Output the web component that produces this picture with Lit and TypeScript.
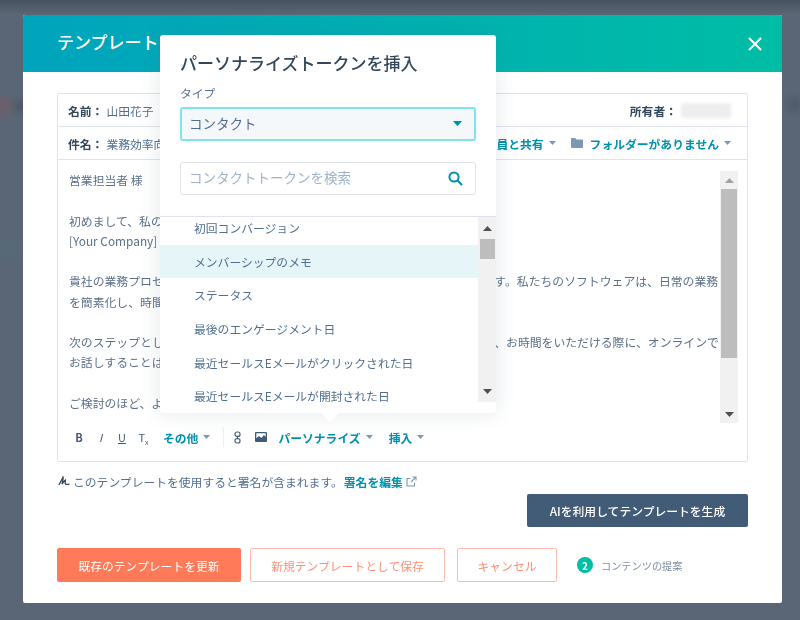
import { css, html, LitElement } from "lit";
import { customElement } from "lit/decorators.js";

const caret = (w = 7) => html`<svg class="caret" width=${w} height=${w * 0.57} viewBox="0 0 7 4"><path d="M0 0h7L3.5 4z" fill="currentColor"/></svg>`;

const bodyLines = [
  "営業担当者 様",
  "",
  "初めまして、私の名前は山田花子と申します。",
  "[Your Company] の営業を担当しております。",
  "",
  "貴社の業務プロセスをより一層効率的にするお手伝いができると確信しております。私たちのソフトウェアは、日常の業務",
  "を簡素化し、時間とコストの削減に貢献いたします。",
  "",
  "次のステップとして、ぜひ一度お打ち合わせの機会を頂戴いたしたく存じますが、お時間をいただける際に、オンラインで",
  "お話しすることは可能でしょうか。",
  "",
  "ご検討のほど、よろしくお願いいたします。",
];

const tokens = [
  "初回コンバージョン",
  "メンバーシップのメモ",
  "ステータス",
  "最後のエンゲージメント日",
  "最近セールスEメールがクリックされた日",
  "最近セールスEメールが開封された日",
];

@customElement("app-root")
export class AppRoot extends LitElement {
  static styles = css`
    :host {
      display: block;
      width: 800px;
      height: 620px;
      box-sizing: border-box;
      padding: 15px 18px 17px 23px;
      overflow: hidden;
      font-family: "Noto Sans CJK JP", "Noto Sans", sans-serif;
      font-size: 11.8px;
      color: #516f90;
      background:
        radial-gradient(circle at 2px 106px, rgba(150, 80, 80, 0.35), transparent 16px),
        radial-gradient(circle at 20px 106px, rgba(60, 70, 85, 0.4), transparent 12px),
        radial-gradient(circle at 8px 250px, rgba(80, 110, 120, 0.4), transparent 16px),
        radial-gradient(circle at 795px 105px, rgba(70, 80, 95, 0.5), transparent 14px),
        linear-gradient(#46525f 0, #5a6675 14px, #5a6675 100%);
    }
    .modal {
      position: relative;
      height: 588px;
      display: flex;
      flex-direction: column;
      background: #fff;
      border-radius: 2px;
      filter: blur(0.35px);
    }
    .head {
      height: 57px;
      flex: none;
      display: flex;
      align-items: center;
      justify-content: space-between;
      padding: 0 19px 0 34px;
      background: linear-gradient(90deg, #00a4bd, #00bda5);
      border-radius: 2px 2px 0 0;
      color: #fff;
      box-sizing: border-box;
    }
    .head h1 {
      margin: 0 0 4px;
      font-size: 17px;
      line-height: 24px;
      font-weight: 500;
    }
    .content {
      flex: 1;
      display: flex;
      flex-direction: column;
      padding: 21px 34px 0;
    }
    .editor {
      height: 369px;
      box-sizing: border-box;
      display: flex;
      flex-direction: column;
      border: 1px solid #dfe3eb;
      border-radius: 2px;
    }
    .row {
      flex: none;
      height: 33px;
      box-sizing: border-box;
      display: flex;
      align-items: center;
      padding: 0 16px 0 10px;
      border-bottom: 1px solid #dfe3eb;
      white-space: nowrap;
    }
    .row b {
      color: #33475b;
      font-weight: 700;
      margin-right: 3px;
    }
    .row .grow {
      flex: 1;
    }
    .redacted {
      width: 50px;
      height: 15px;
      margin-left: 1px;
      background: #eeeeee;
      border-radius: 2px;
      filter: blur(1.5px);
    }
    .link {
      color: #0091ae;
      font-weight: 700;
    }
    .caret {
      flex: none;
    }
    .row .caret,
    .tools .caret {
      color: #7c98b6;
      margin-left: 5px;
    }
    .folder {
      color: #7c98b6;
      margin: 0 7px 0 15px;
    }
    .body {
      flex: 1;
      min-height: 0;
      display: flex;
      padding: 11px 9px 0 11px;
    }
    .text {
      flex: 1;
      min-width: 0;
      overflow: hidden;
      margin-top: -1px;
      font-size: 11.85px;
      line-height: 20.25px;
      white-space: nowrap;
      color: #5b7088;
    }
    .text div {
      min-height: 20.25px;
    }
    .scroll {
      flex: none;
      display: flex;
      flex-direction: column;
      align-items: center;
      width: 18px;
      background: #f1f1f1;
    }
    .scroll .thumb {
      width: 16px;
      background: #bdbdbd;
    }
    .scroll .btn {
      flex: none;
      height: 18px;
      display: flex;
      align-items: center;
      justify-content: center;
      color: #a3a3a3;
    }
    .scroll .btn.dark {
      color: #505050;
    }
    .scroll .fill {
      flex: 1;
    }
    .tools {
      flex: none;
      height: 38px;
      box-sizing: border-box;
      padding: 0 0 10px 16px;
      display: flex;
      align-items: center;
      white-space: nowrap;
      font-size: 11px;
    }
    .tools .fmt {
      width: 10px;
      text-align: center;
      color: #425b76;
      margin-right: 11.5px;
    }
    .tools .tx sub {
      font-size: 7px;
      line-height: 0;
    }
    .tools .link {
      font-size: 11.8px;
    }
    .tools .more {
      margin-left: 3px;
    }
    .tools .sep {
      width: 1px;
      height: 20px;
      background: #eaf0f6;
      margin: 0 10px 0 13px;
    }
    .tools svg.ic {
      color: #425b76;
      flex: none;
    }
    .tools .img {
      margin-left: 14px;
    }
    .tools .personal {
      margin-left: 11px;
    }
    .tools .insert {
      margin-left: 16px;
    }
    .sign {
      display: flex;
      align-items: center;
      gap: 3px;
      height: 16px;
      margin-top: 11px;
      padding-left: 1px;
      white-space: nowrap;
    }
    .sign .link {
      margin-left: -2px;
      margin-right: 0;
    }
    .ai {
      display: flex;
      justify-content: flex-end;
      margin-top: 5px;
    }
    .btn-main {
      height: 34px;
      box-sizing: border-box;
      border-radius: 2px;
      display: flex;
      align-items: center;
      justify-content: center;
      white-space: nowrap;
    }
    .ai .btn-main {
      width: 221px;
      height: 33px;
      background: #425b76;
      color: #fff;
      font-weight: 500;
    }
    .actions {
      display: flex;
      align-items: center;
      margin-top: 21px;
    }
    .orange {
      width: 184px;
      background: #ff7a59;
      color: #fff;
    }
    .outline {
      border: 1px solid #ffbcac;
      color: #ff8f73;
      background: #fff;
    }
    .save {
      width: 195px;
      margin-left: 9px;
    }
    .cancel {
      width: 100px;
      margin-left: 12px;
    }
    .badge {
      width: 16px;
      height: 16px;
      margin-left: 20px;
      border-radius: 50%;
      background: #00bda5;
      color: #fff;
      font-size: 10px;
      font-weight: 700;
      display: flex;
      align-items: center;
      justify-content: center;
    }
    .hint {
      margin-left: 8px;
      font-size: 10.2px;
      color: #7c8ea3;
      white-space: nowrap;
    }

    .pop {
      position: absolute;
      left: 137px;
      top: 20px;
      width: 336px;
      height: 378px;
      display: flex;
      flex-direction: column;
      background: #fff;
      border-radius: 3px;
      box-shadow: 0 0 20px rgba(66, 91, 118, 0.14);
    }
    .pop::after {
      content: "";
      position: absolute;
      left: 160px;
      bottom: -9px;
      width: 20px;
      height: 10px;
      background: #fff;
      clip-path: polygon(0 0, 100% 0, 50% 100%);
    }
    .pop-top {
      flex: none;
      padding: 16px 20px 0;
    }
    .pop h2 {
      margin: 0;
      font-size: 17px;
      line-height: 24px;
      font-weight: 500;
      color: #33475b;
      white-space: nowrap;
    }
    .pop label {
      display: block;
      margin-top: 10px;
      line-height: 16px;
      color: #516f90;
    }
    .select {
      height: 34px;
      box-sizing: border-box;
      margin-top: 6px;
      padding: 0 12px 2px 7px;
      display: flex;
      align-items: center;
      justify-content: space-between;
      background: #f5f8fa;
      border: 2px solid #7fe3f0;
      border-radius: 3px;
      font-size: 13.5px;
      color: #516f90;
    }
    .select .caret {
      color: #0091ae;
      margin-top: 2px;
    }
    .search {
      height: 33px;
      box-sizing: border-box;
      margin-top: 21px;
      padding: 0 12px 3px 8px;
      display: flex;
      align-items: center;
      justify-content: space-between;
      border: 1px solid #dfe3eb;
      border-radius: 3px;
      font-size: 13.5px;
      color: #9fb3c8;
      white-space: nowrap;
    }
    .search svg {
      margin-top: 3px;
    }
    .pop-list {
      flex: none;
      height: 186px;
      margin-top: 21px;
      display: flex;
      border-top: 1px solid #dfe3eb;
      box-sizing: border-box;
    }
    .items {
      flex: 1;
      min-width: 0;
      overflow: hidden;
    }
    .items div {
      height: 33.6px;
      display: flex;
      align-items: center;
      padding-left: 34px;
      color: #516f90;
      white-space: nowrap;
    }
    .items div:first-child {
      margin-top: -6px;
    }
    .items .on {
      background: #e5f5f8;
    }
    .pop-list .scroll {
      width: 18px;
    }
    .pop-list .scroll .thumb {
      width: 15px;
    }
    .pop-list .btn {
      height: 22px;
      color: #505050;
    }
  `;

  private arrow(up: boolean, dark: boolean) {
    return html`<div class="btn ${dark ? "dark" : ""}">
      <svg width="9" height="5" viewBox="0 0 9 5"><path d=${up ? "M0 5L4.5 0 9 5z" : "M0 0h9L4.5 5z"} fill="currentColor"/></svg>
    </div>`;
  }

  render() {
    return html`
      <div class="modal">
        <div class="head">
          <h1>テンプレート</h1>
          <svg width="16" height="16" viewBox="0 0 16 16"><path d="M2 2l12 12M14 2L2 14" stroke="#fff" stroke-width="2" fill="none"/></svg>
        </div>
        <div class="content">
          <div class="editor">
            <div class="row">
              <b>名前：</b><span>山田花子</span>
              <span class="grow"></span>
              <b>所有者：</b><span class="redacted"></span>
            </div>
            <div class="row">
              <b>件名：</b><span>業務効率向上のご提案</span>
              <span class="grow"></span>
              <span class="link">全員と共有</span>${caret()}
              <svg class="folder" width="12" height="10" viewBox="0 0 12 10"><path d="M0 1a1 1 0 0 1 1-1h3l1.5 1.5H11a1 1 0 0 1 1 1V9a1 1 0 0 1-1 1H1a1 1 0 0 1-1-1z" fill="currentColor"/></svg>
              <span class="link">フォルダーがありません</span>${caret()}
            </div>
            <div class="body">
              <div class="text">
                ${bodyLines.map((l) => html`<div>${l}</div>`)}
              </div>
              <div class="scroll">
                ${this.arrow(true, false)}
                <div class="thumb" style="height:169px"></div>
                <div class="fill"></div>
                ${this.arrow(false, true)}
              </div>
            </div>
            <div class="tools">
              <span class="fmt" style="font-weight:700">B</span>
              <span class="fmt" style="font-style:italic">I</span>
              <span class="fmt" style="text-decoration:underline">U</span>
              <span class="fmt tx">T<sub>x</sub></span>
              <span class="link more">その他</span>${caret()}
              <span class="sep"></span>
              <svg class="ic" width="7" height="13" viewBox="0 0 7 13" fill="none" stroke="currentColor" stroke-width="1.2"><rect x="1" y="1" width="5" height="4.4" rx="2"/><rect x="1" y="7.6" width="5" height="4.4" rx="2"/><path d="M3.5 5v3"/></svg>
              <svg class="ic img" width="12" height="10" viewBox="0 0 12 10"><path fill-rule="evenodd" d="M0 1a1 1 0 0 1 1-1h10a1 1 0 0 1 1 1v8a1 1 0 0 1-1 1H1a1 1 0 0 1-1-1zm1.3.3v5L4 4l2.3 2L9 3l1.7 2V1.3z" fill="currentColor"/></svg>
              <span class="link personal">パーソナライズ</span>${caret()}
              <span class="link insert">挿入</span>${caret()}
            </div>
          </div>
          <div class="sign">
            <svg width="12" height="10" viewBox="0 0 12 10" fill="none" stroke="#33475b" stroke-width="1.3"><path d="M0.8 9C2.5 6.5 4 3 5 1c.5 2-.5 5-1 7 1.5-2 2.5-3.5 3.4-4-.2 1.5-.4 3 0 4 .8.7 2.3.4 4 .2"/></svg>
            <span>このテンプレートを使用すると署名が含まれます。</span>
            <span class="link">署名を編集</span>
            <svg width="11" height="11" viewBox="0 0 11 11" fill="none" stroke="#7c98b6" stroke-width="1.1"><path d="M8.5 6.5V10H1V2.5h3.5M6.5 1H10v3.5M10 1L5 6"/></svg>
          </div>
          <div class="ai"><div class="btn-main">AIを利用してテンプレートを生成</div></div>
          <div class="actions">
            <div class="btn-main orange">既存のテンプレートを更新</div>
            <div class="btn-main outline save">新規テンプレートとして保存</div>
            <div class="btn-main outline cancel">キャンセル</div>
            <div class="badge">2</div>
            <div class="hint">コンテンツの提案</div>
          </div>
        </div>

        <div class="pop">
          <div class="pop-top">
            <h2>パーソナライズトークンを挿入</h2>
            <label>タイプ</label>
            <div class="select"><span>コンタクト</span>${caret(9)}</div>
            <div class="search">
              <span>コンタクトトークンを検索</span>
              <svg width="15" height="15" viewBox="0 0 15 15" fill="none" stroke="#0091ae" stroke-width="2"><circle cx="6" cy="6" r="4.6"/><path d="M9.5 9.5L14 14"/></svg>
            </div>
          </div>
          <div class="pop-list">
            <div class="items">
              ${tokens.map((t, i) => html`<div class=${i === 1 ? "on" : ""}>${t}</div>`)}
            </div>
            <div class="scroll">
              ${this.arrow(true, true)}
              <div class="thumb" style="height:20px"></div>
              <div class="fill"></div>
              ${this.arrow(false, true)}
            </div>
          </div>
        </div>
      </div>
    `;
  }
}
